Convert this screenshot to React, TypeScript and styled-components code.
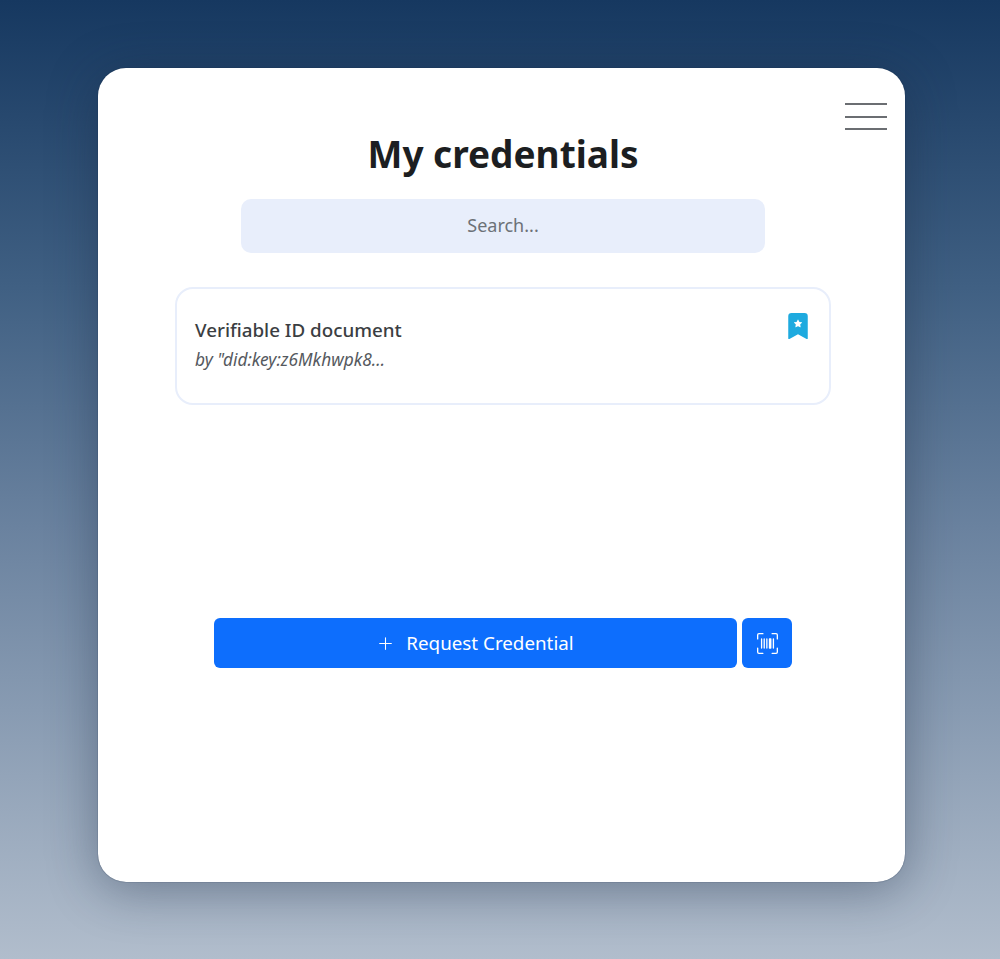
import React from 'react';
import styled, { createGlobalStyle } from 'styled-components';
import { BsBookmarkStarFill, BsPlusLg, BsUpcScan } from 'react-icons/bs';

const GlobalStyle = createGlobalStyle`
  html, body {
    margin: 0;
    padding: 0;
  }
  body {
    font-family: "Noto Sans", "Open Sans", sans-serif;
    color: #212529;
  }
`;

const Page = styled.div`
  width: 1000px;
  height: 959px;
  overflow: hidden;
  box-sizing: border-box;
  padding: 68px 95px 0 98px;
  background: linear-gradient(180deg, #163860 0%, #406083 30%, #6a829f 55%, #b1bdcc 100%);
`;

const Wallet = styled.main`
  position: relative;
  box-sizing: border-box;
  height: 814px;
  padding: 63px 74px 0 77px;
  display: flex;
  flex-direction: column;
  align-items: center;
  background: #fff;
  border-radius: 28px;
  box-shadow: 0 0 1px #0d2444, 0 8px 50px rgba(25, 40, 65, 0.4);
`;

const MenuButton = styled.button`
  position: absolute;
  top: 35px;
  right: 18px;
  width: 42px;
  height: 27px;
  padding: 0;
  border: 0;
  background: none;
  display: flex;
  flex-direction: column;
  justify-content: space-between;
`;

const MenuLine = styled.span`
  display: block;
  height: 2px;
  background: #6b6e72;
`;

const Title = styled.h1`
  margin: 0 0 22px;
  font-size: 37px;
  line-height: 46px;
  font-weight: 700;
  color: #1c1e21;
`;

const Search = styled.input`
  box-sizing: border-box;
  width: 524px;
  height: 54px;
  flex: none;
  padding: 0 0 2px;
  border: 0;
  border-radius: 10px;
  outline: none;
  background: #e8eefb;
  text-align: center;
  font: 400 18px "Noto Sans", sans-serif;
  &::placeholder {
    color: #6c7177;
    opacity: 1;
  }
`;

const CredentialCard = styled.article`
  box-sizing: border-box;
  width: 656px;
  height: 118px;
  flex: none;
  margin-top: 34px;
  padding: 29px 21px 0 18px;
  display: flex;
  justify-content: space-between;
  align-items: flex-start;
  border: 2px solid #e8eefb;
  border-radius: 18px;
`;

const CredentialName = styled.h2`
  margin: 0;
  font-size: 18.8px;
  line-height: 24px;
  font-weight: 500;
  color: #3b3e42;
`;

const Issuer = styled.p`
  margin: 8px 0 0;
  font-size: 17.3px;
  line-height: 20px;
  font-style: italic;
  color: #55595e;
`;

const Bookmark = styled(BsBookmarkStarFill)`
  flex: none;
  margin: -5px -3px 0 0;
  color: #1eaadf;
`;

const Actions = styled.div`
  display: flex;
  gap: 5px;
  margin-top: 213px;
`;

const RequestButton = styled.button`
  width: 523px;
  height: 50px;
  padding: 0;
  border: 0;
  border-radius: 6px;
  background: #0d6efd;
  color: #fff;
  display: flex;
  align-items: center;
  justify-content: center;
  gap: 12px;
  font: 400 18.8px "Noto Sans", sans-serif;
`;

const ScanButton = styled.button`
  width: 50px;
  height: 50px;
  padding: 0;
  border: 0;
  border-radius: 6px;
  background: #0d6efd;
  color: #fff;
  display: flex;
  align-items: center;
  justify-content: center;
`;

const App = () => {
  return (
    <Page>
      <GlobalStyle />
      <Wallet>
        <MenuButton aria-label="Menu">
          <MenuLine />
          <MenuLine />
          <MenuLine />
        </MenuButton>
        <Title>My credentials</Title>
        <Search placeholder="Search..." />
        <CredentialCard>
          <div>
            <CredentialName>Verifiable ID document</CredentialName>
            <Issuer>by "did:key:z6Mkhwpk8…</Issuer>
          </div>
          <Bookmark size={26} />
        </CredentialCard>
        <Actions>
          <RequestButton>
            <BsPlusLg size={17} />
            Request Credential
          </RequestButton>
          <ScanButton aria-label="Scan">
            <BsUpcScan size={21} />
          </ScanButton>
        </Actions>
      </Wallet>
    </Page>
  );
};

export default App;
